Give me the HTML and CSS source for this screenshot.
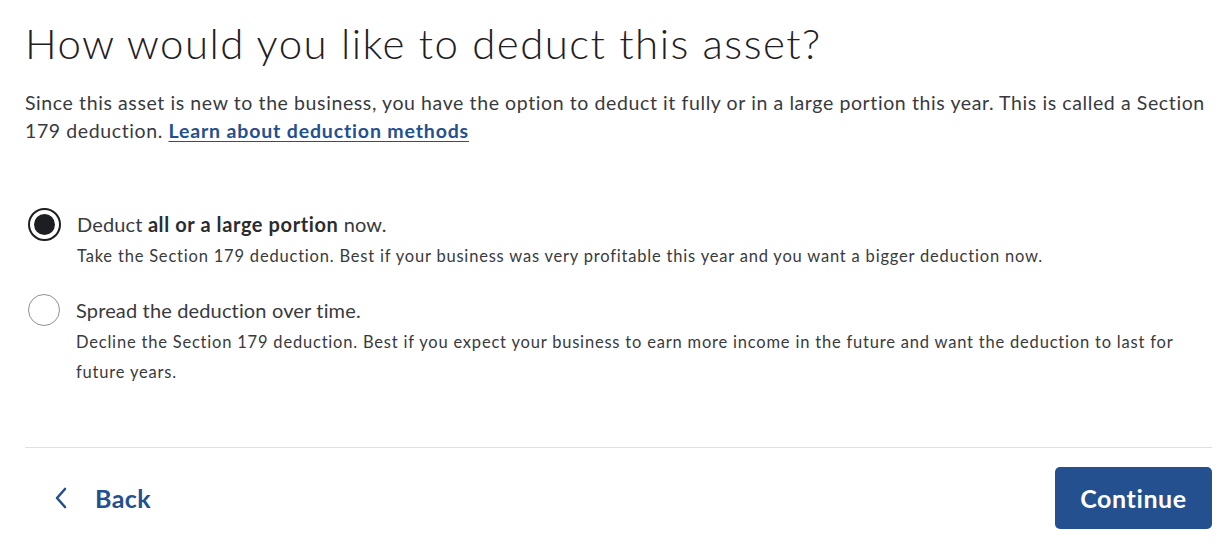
FILE: index.html
```html
<!DOCTYPE html>
<html lang="en">
<head>
<meta charset="utf-8">
<title>Deduct asset</title>
<link rel="stylesheet" href="styles.css">
</head>
<body>
<main class="page">
  <h1 class="title">How would you like to deduct this asset?</h1>
  <p class="intro">Since this asset is new to the business, you have the option to deduct it fully or in a large portion this year. This is called a Section 179 deduction. <a class="link" href="#">Learn about deduction methods</a></p>

  <div class="options">
    <label class="option">
      <span class="radio checked"><span class="dot"></span></span>
      <span class="text">
        <span class="label">Deduct <b>all or a large portion</b> now.</span>
        <span class="desc">Take the Section 179 deduction. Best if your business was very profitable this year and you want a bigger deduction now.</span>
      </span>
    </label>
    <label class="option">
      <span class="radio"></span>
      <span class="text">
        <span class="label">Spread the deduction over time.</span>
        <span class="desc">Decline the Section 179 deduction. Best if you expect your business to earn more income in the future and want the deduction to last for future years.</span>
      </span>
    </label>
  </div>

  <hr class="divider">

  <div class="footer">
    <a class="back" href="#">
      <svg class="chev" width="14" height="22" viewBox="0 0 14 22"><path d="M11 2 L3 11 L11 20" fill="none" stroke="#24508f" stroke-width="2.6" stroke-linecap="round" stroke-linejoin="round"/></svg>
      <span>Back</span>
    </a>
    <button class="continue">Continue</button>
  </div>
</main>
</body>
</html>
```
FILE: styles.css
```css
html, body {
  margin: 0;
  padding: 0;
  background: #ffffff;
}
body {
  font-family: Lato, "Noto Sans", sans-serif;
  color: #2b2c2f;
}
.page {
  width: 1187px;
  padding: 15px 0 0 25px;
}
.title {
  margin: 0;
  font-size: 42px;
  font-weight: 300;
  line-height: 56px;
  color: #1f2023;
  letter-spacing: 1.45px;
}
.intro {
  margin: 18px 0 0;
  font-size: 19.5px;
  line-height: 28px;
  color: #393a3d;
  letter-spacing: 0.6px;
}
.link {
  color: #24508f;
  font-weight: 700;
  letter-spacing: 0.85px;
  text-decoration: underline;
  text-underline-offset: 3px;
}
.options {
  margin-top: 62px;
  display: flex;
  flex-direction: column;
  gap: 22px;
}
.option {
  display: flex;
  align-items: flex-start;
  gap: 16px;
}
.radio {
  flex: none;
  width: 30px;
  height: 30px;
  border: 1.5px solid #8d9096;
  border-radius: 50%;
  display: flex;
  align-items: center;
  justify-content: center;
  margin: 1px 0 0 3px;
  box-sizing: content-box;
}
.radio.checked {
  border: 2px solid #1d1e21;
  width: 29px;
  height: 29px;
}
.dot {
  width: 21px;
  height: 21px;
  border-radius: 50%;
  background: #1d1e21;
}
.text {
  display: flex;
  flex-direction: column;
  padding-top: 3px;
}
.label {
  font-size: 20px;
  line-height: 28px;
  color: #393a3d;
  letter-spacing: 0.15px;
}
.label b {
  font-weight: 700;
  color: #2b2c2f;
  letter-spacing: 0.6px;
}
.desc {
  margin-top: 3px;
  font-size: 16.5px;
  line-height: 30px;
  color: #393a3d;
  letter-spacing: 0.8px;
}
.divider {
  margin: 60px 0 0;
  border: 0;
  border-top: 1.5px solid #dde0e4;
}
.footer {
  display: flex;
  justify-content: space-between;
  align-items: center;
  margin-top: 19px;
}
.back {
  display: flex;
  align-items: center;
  gap: 27px;
  margin-left: 29px;
  color: #24508f;
  font-weight: 700;
  font-size: 25px;
  letter-spacing: 0.4px;
  text-decoration: none;
}
.continue {
  width: 157px;
  height: 62px;
  border: 0;
  border-radius: 5px;
  background: #24508f;
  color: #ffffff;
  font-family: Lato, "Noto Sans", sans-serif;
  font-size: 25px;
  font-weight: 700;
  letter-spacing: 0.6px;
  cursor: pointer;
}
```
